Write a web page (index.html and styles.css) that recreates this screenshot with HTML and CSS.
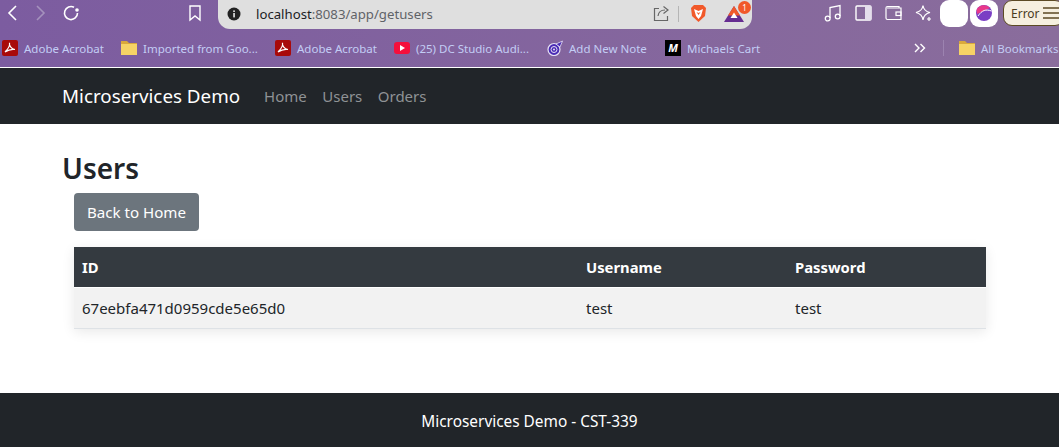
FILE: index.html
```html
<!DOCTYPE html>
<html lang="en">
<head>
    <meta charset="UTF-8">
    <title>Users</title>
    <link rel="stylesheet" href="styles.css">
</head>
<body>

<div class="browser">
    <div class="toolbar">
        <svg class="tool tool-back" width="14" height="18" viewBox="0 0 14 18"><path d="M11 2 L4 9 L11 16" fill="none" stroke="#fff" stroke-width="1.6"/></svg>
        <svg class="tool tool-forward" width="14" height="18" viewBox="0 0 14 18"><path d="M3 2 L10 9 L3 16" fill="none" stroke="#a592bd" stroke-width="1.6"/></svg>
        <svg class="tool tool-reload" width="18" height="18" viewBox="0 0 18 18"><path d="M15.5 9 A6.5 6.5 0 1 1 12 3.3" fill="none" stroke="#fff" stroke-width="1.6"/><circle cx="15" cy="6" r="1.8" fill="#fff"/></svg>
        <svg class="tool tool-star" width="14" height="18" viewBox="0 0 14 18"><path d="M2 2 H12 V16 L7 12 L2 16 Z" fill="none" stroke="#fff" stroke-width="1.4"/></svg>
        <div class="urlbar">
            <svg class="info" width="14" height="14" viewBox="0 0 14 14"><circle cx="7" cy="7" r="6.5" fill="#222"/><rect x="6.2" y="6" width="1.7" height="4.4" fill="#ddd"/><rect x="6.2" y="3.4" width="1.7" height="1.6" fill="#ddd"/></svg>
            <span class="url"><span class="url-host">localhost</span>:8083/app/getusers</span>
            <svg class="share" width="17" height="17" viewBox="0 0 17 17"><path d="M6 3.5 H1.5 V15.5 H14.5 V11" fill="none" stroke="#666" stroke-width="1.2"/><path d="M5 11 C5.5 7 8.5 5 12 5 M10.5 1.5 L15 5 L10.5 8.5" fill="none" stroke="#666" stroke-width="1.2"/></svg>
            <span class="url-sep"></span>
            <svg class="brave" width="17" height="19" viewBox="0 0 17 19"><path d="M4 1 H13 L16 4 L15 12 L8.5 18 L2 12 L1 4 Z" fill="#f1592a"/><path d="M4 5 L8.5 7 L13 5 L11 12 L8.5 15 L6 12 Z" fill="#fff"/><path d="M6.5 8 L8.5 11 L10.5 8 L8.5 9 Z" fill="#f1592a"/></svg>
            <div class="rewards">
                <svg width="22" height="18" viewBox="0 0 22 18"><path d="M11 1 L21 17 H1 Z" fill="#662d91"/><path d="M11 1 L17 10.5 H5 Z" fill="#f1592a"/><path d="M11 7.5 L14.5 13 H7.5 Z" fill="#fff"/></svg>
                <span class="badge">1</span>
            </div>
        </div>
        <div class="tool-right">
            <svg width="18" height="18" viewBox="0 0 18 18"><path d="M6 14 V3.5 L16 1.5 V12" fill="none" stroke="#fff" stroke-width="1.3"/><circle cx="3.7" cy="14.5" r="2.4" fill="none" stroke="#fff" stroke-width="1.3"/><circle cx="13.7" cy="12.5" r="2.4" fill="none" stroke="#fff" stroke-width="1.3"/></svg>
            <svg width="17" height="16" viewBox="0 0 17 16"><rect x="1" y="1" width="15" height="14" rx="1" fill="none" stroke="#fff" stroke-width="1.4"/><rect x="10" y="1" width="6" height="14" fill="#e4deec"/></svg>
            <svg width="17" height="16" viewBox="0 0 17 16"><path d="M14 3 V1.5 H2.5 Q1 1.5 1 3 V13 Q1 14.5 2.5 14.5 H16 V3 H2" fill="none" stroke="#fff" stroke-width="1.2"/><rect x="11" y="7" width="5" height="3.5" fill="none" stroke="#fff" stroke-width="1.2"/></svg>
            <svg width="17" height="18" viewBox="0 0 17 18"><path d="M8 1.5 C8.5 5.5 10 7.5 15 8.5 C10.5 9.5 8.5 11.5 8 16 C7.5 11.5 5 9.5 1 8.5 C5 7.5 7.5 5.5 8 1.5 Z" fill="none" stroke="#fff" stroke-width="1.2"/><path d="M14 13 V17 M12 15 H16" stroke="#fff" stroke-width="1.2"/></svg>
            <span class="ext-box"></span>
            <span class="ext-box">
                <svg width="18" height="18" viewBox="0 0 18 18"><circle cx="9" cy="9" r="8" fill="#7b3fc4"/><path d="M1.5 6 A8 8 0 0 1 15 4 L2 10 Z" fill="#e8388a"/><path d="M3 12 C7 6 11 5 16.5 7" fill="none" stroke="#fff" stroke-width="1"/></svg>
            </span>
            <span class="error-pill">Error
                <svg width="17" height="12" viewBox="0 0 17 12"><path d="M0 1 H17 M0 6 H17 M0 11 H17" stroke="#5c4a24" stroke-width="1.5"/></svg>
            </span>
        </div>
    </div>
    <div class="bookmarks">
        <span class="bm bm-a"><svg class="ico" width="16" height="16" viewBox="0 0 16 16"><rect width="16" height="16" rx="2" fill="#a80a0a"/><path d="M3 12 C6 9 8 5 7.5 3 C7 5 9 9 13 9.5 C10 9 6 10 3 12 Z" fill="none" stroke="#fff" stroke-width="1.2"/></svg>Adobe Acrobat</span>
        <span class="bm bm-b"><svg class="ico" width="16" height="14" viewBox="0 0 16 14"><path d="M0 0 H6 L8 2 H16 V14 H0 Z" fill="#d9a83c"/><rect y="3" width="16" height="11" fill="#f6d365"/></svg>Imported from Goo...</span>
        <span class="bm bm-c"><svg class="ico" width="16" height="16" viewBox="0 0 16 16"><rect width="16" height="16" rx="2" fill="#a80a0a"/><path d="M3 12 C6 9 8 5 7.5 3 C7 5 9 9 13 9.5 C10 9 6 10 3 12 Z" fill="none" stroke="#fff" stroke-width="1.2"/></svg>Adobe Acrobat</span>
        <span class="bm bm-d"><svg class="ico" width="16" height="12" viewBox="0 0 16 12"><rect width="16" height="12" rx="3" fill="#f50f3c"/><path d="M6 3 L11 6 L6 9 Z" fill="#fff"/></svg>(25) DC Studio Audi...</span>
        <span class="bm bm-e"><svg class="ico" width="16" height="16" viewBox="0 0 16 16"><circle cx="7" cy="9.5" r="6" fill="#4a2bb5" stroke="#e6e0f5" stroke-width="1.2"/><circle cx="7" cy="9.5" r="3" fill="none" stroke="#e6e0f5" stroke-width="1"/><circle cx="7" cy="9.5" r="1" fill="#e6e0f5"/><path d="M9 4 L15.5 1 L13 7 Z" fill="#4a2bb5" stroke="#e6e0f5" stroke-width="0.8"/></svg>Add New Note</span>
        <span class="bm bm-f"><span class="mc-ico">M</span>Michaels Cart</span>
        <svg class="bm-more" width="12" height="10" viewBox="0 0 12 10"><path d="M1 1 L5 5 L1 9 M6.5 1 L10.5 5 L6.5 9" fill="none" stroke="#fff" stroke-width="1.4"/></svg>
        <span class="bm-sep"></span>
        <span class="bm"><svg class="ico" width="16" height="14" viewBox="0 0 16 14"><path d="M0 0 H6 L8 2 H16 V14 H0 Z" fill="#d9a83c"/><rect y="3" width="16" height="11" fill="#f6d365"/></svg>All Bookmarks</span>
    </div>
</div>

<nav class="navbar">
    <a class="brand" href="#">Microservices Demo</a>
    <a class="nav-link" href="#">Home</a>
    <a class="nav-link" href="#">Users</a>
    <a class="nav-link" href="#">Orders</a>
</nav>

<main class="content">
    <h1>Users</h1>
    <div class="inner">
        <a class="btn" href="#">Back to Home</a>
        <table>
            <thead>
                <tr>
                    <th class="col-id">ID</th>
                    <th class="col-user">Username</th>
                    <th>Password</th>
                </tr>
            </thead>
            <tbody>
                <tr>
                    <td>67eebfa471d0959cde5e65d0</td>
                    <td>test</td>
                    <td>test</td>
                </tr>
            </tbody>
        </table>
    </div>
</main>

<footer class="footer">Microservices Demo - CST-339</footer>

</body>
</html>
```

FILE: styles.css
```css
* {
    box-sizing: border-box;
}

html, body {
    height: 100%;
}

body {
    margin: 0;
    display: flex;
    flex-direction: column;
    height: 447px;
    overflow: hidden;
    background-color: #fff;
    color: #212529;
    font-family: "Noto Sans", "Open Sans", sans-serif;
    font-size: 15px;
}

a {
    text-decoration: none;
}

/* browser chrome */
.browser {
    height: 68px;
    border-bottom: 1px solid #fff;
    background: linear-gradient(90deg, #7c5ca0, #8a6d9c);
    overflow: hidden;
}

.toolbar {
    display: flex;
    align-items: center;
    height: 29px;
    padding: 0 0 3px 5px;
}

.toolbar svg {
    flex-shrink: 0;
}

.tool-forward {
    margin-left: 15px;
}

.tool-reload {
    margin-left: 14px;
}

.tool-star {
    margin-left: 108px;
    margin-right: 16px;
}

.urlbar {
    display: flex;
    align-items: center;
    align-self: flex-start;
    flex-shrink: 0;
    width: 534px;
    height: 29px;
    padding: 0 7px 2px 9px;
    background-color: #dfdfdf;
    border-radius: 0 0 12px 12px;
}

.url {
    margin-left: 15px;
    flex: 1;
    font-size: 13.2px;
    color: #5f6368;
}

.url-host {
    color: #202124;
}

.url-sep {
    width: 1px;
    height: 16px;
    margin: 0 11px 0 8px;
    background-color: #b5b5b5;
}

.rewards {
    position: relative;
    display: flex;
    margin-left: 16px;
}

.badge {
    position: absolute;
    top: -4px;
    right: -6px;
    width: 13px;
    height: 13px;
    border-radius: 50%;
    background-color: #f1592a;
    color: #fff;
    font-size: 8px;
    line-height: 13px;
    text-align: center;
}

.tool-right {
    display: flex;
    align-items: center;
    flex-shrink: 0;
    gap: 13px;
    margin-left: 72px;
}

.ext-box {
    display: flex;
    align-items: center;
    justify-content: center;
    flex-shrink: 0;
    width: 28px;
    height: 27px;
    margin-left: -5px;
    margin-right: -2px;
    background-color: #fff;
    border-radius: 9px;
}

.ext-box + .ext-box {
    margin-left: -9px;
    margin-right: -8px;
}

.error-pill {
    display: flex;
    align-items: center;
    gap: 3px;
    flex-shrink: 0;
    height: 26px;
    padding: 0 3px 0 7px;
    background-color: #f6efdf;
    border: 1px solid #5c4a24;
    border-radius: 9px;
    color: #4a3c1d;
    font-size: 12px;
}

.bookmarks {
    display: flex;
    align-items: center;
    height: 38px;
    padding-left: 2px;
    font-size: 11.5px;
    color: #c3cdf5;
    white-space: nowrap;
}

.bm {
    display: flex;
    align-items: center;
}

.ico, .mc-ico {
    margin-right: 6px;
    flex-shrink: 0;
}

.mc-ico {
    width: 16px;
    height: 16px;
    background-color: #000;
    color: #fff;
    font-size: 11px;
    font-style: italic;
    font-weight: bold;
    line-height: 16px;
    text-align: center;
}

.bm-a { width: 119px; }
.bm-b { width: 154px; }
.bm-c { width: 119px; }
.bm-d { width: 153px; }
.bm-e { width: 118px; }
.bm-f { width: 249px; }

.bm-more {
    margin-right: 17px;
}

.bm-sep {
    width: 1px;
    height: 16px;
    margin-right: 15px;
    background-color: #9c83b0;
}

/* navbar */
.navbar {
    display: flex;
    align-items: center;
    height: 56px;
    padding-left: 62px;
    background-color: #212529;
}

.brand {
    margin-right: 24px;
    color: #fff;
    font-size: 18.8px;
}

.nav-link {
    margin-right: 15.5px;
    color: #8f9295;
    font-size: 15px;
}

/* content */
.content {
    flex: 1;
    padding: 24px 73px 0 62px;
}

h1 {
    margin: 0 0 5px;
    font-size: 28px;
    font-weight: 600;
    line-height: 40px;
}

.inner {
    padding-left: 12px;
}

.btn {
    display: inline-block;
    height: 38px;
    padding: 0 13px;
    background-color: #6c757d;
    border-radius: 4px;
    color: #fff;
    font-size: 15.1px;
    line-height: 38px;
}

table {
    width: 912px;
    margin-top: 16px;
    border-collapse: collapse;
    table-layout: fixed;
    box-shadow: 0 3px 12px rgba(0, 0, 0, 0.09);
}

th {
    height: 40px;
    padding: 0 8px;
    background-color: #343a40;
    border-bottom: 1px solid #fff;
    color: #fff;
    font-size: 14.8px;
    text-align: left;
}

td {
    height: 41px;
    padding: 0 8px;
    background-color: #f2f2f2;
    border-bottom: 1px solid #dee2e6;
    font-size: 15px;
}

.col-id {
    width: 504px;
}

.col-user {
    width: 209px;
}

/* footer */
.footer {
    height: 54px;
    background-color: #212529;
    color: #fff;
    font-size: 15.4px;
    line-height: 58px;
    text-align: center;
}
```
